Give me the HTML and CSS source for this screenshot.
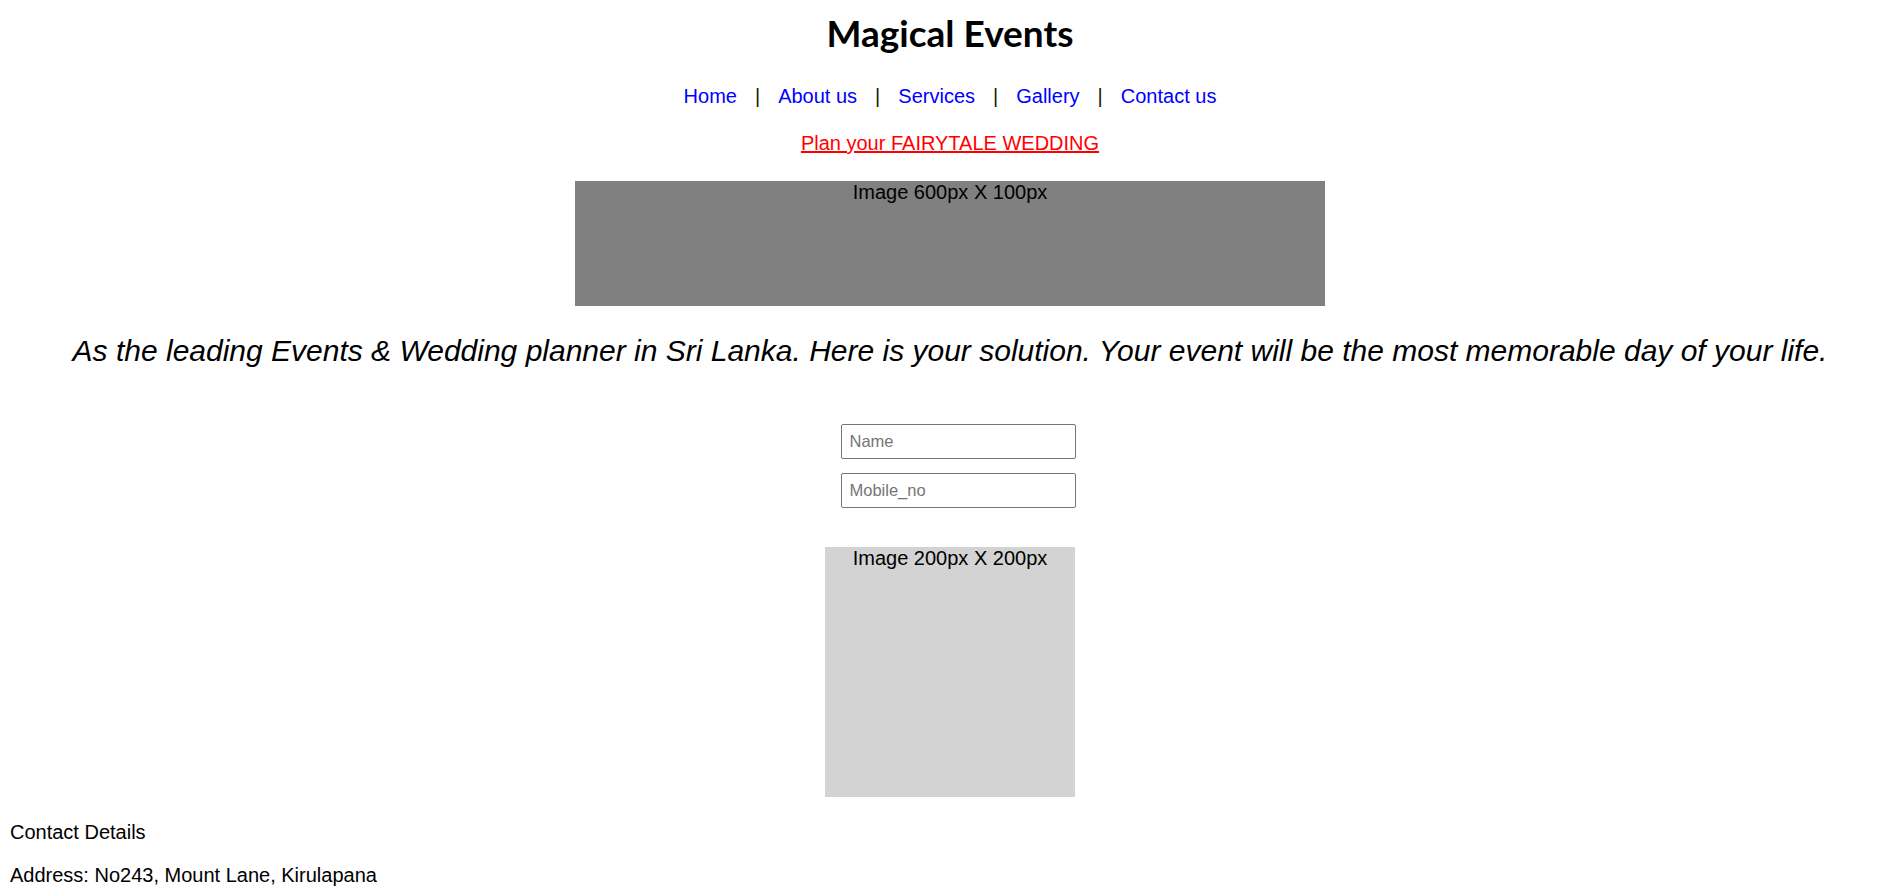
FILE: index.html
```html
<!DOCTYPE html>
<html lang="en">
<head>
    <meta charset="UTF-8">
    <meta name="viewport" content="width=device-width, initial-scale=1.0">
    <title>Magical Events</title>
    <link rel="stylesheet" href="styles.css">
</head>
<body>

    <div class="main">
        <h1 class="title">Magical Events</h1>

        <nav class="nav">
            <a href="#">Home</a><span class="sep">|</span><a href="#">About us</a><span class="sep">|</span><a href="#">Services</a><span class="sep">|</span><a href="#">Gallery</a><span class="sep">|</span><a href="#">Contact us</a>
        </nav>

        <p class="promo"><a href="#">Plan your FAIRYTALE WEDDING</a></p>

        <div class="banner">Image 600px X 100px</div>

        <p class="intro">As the leading Events &amp; Wedding planner in Sri Lanka. Here is your solution. Your event will be the most memorable day of your life.</p>

        <form class="enquiry">
            <input type="text" placeholder="Name">
            <input type="text" placeholder="Mobile_no">
        </form>

        <div class="photo">Image 200px X 200px</div>
    </div>

    <div class="contact">
        <p>Contact Details</p>
        <p>Address: No243, Mount Lane, Kirulapana</p>
    </div>

</body>
</html>
```

FILE: styles.css
```css
body {
    margin: 0 10px;
    font-family: "Liberation Sans", Arial, sans-serif;
    font-size: 20px;
    line-height: 23px;
    color: black;
    background: white;
}

.main {
    text-align: center;
    padding-left: 14px;
}

.title {
    font-family: Lato, "Liberation Sans", sans-serif;
    font-weight: bold;
    font-size: 37px;
    line-height: 48px;
    margin: 9px 0 0;
}

.nav {
    margin-top: 28px;
}

.nav a {
    color: blue;
    text-decoration: none;
}

.sep {
    margin: 0 18px;
    color: #1a1a00;
}

.promo {
    margin: 24px 0 0;
}

.promo a {
    color: red;
}

.banner {
    width: 750px;
    height: 125px;
    margin: 26px auto 0;
    background: gray;
}

.intro {
    font-style: italic;
    font-size: 30px;
    line-height: 34px;
    margin: 28px 0 0;
}

.enquiry {
    display: flex;
    flex-direction: column;
    align-items: center;
    gap: 14px;
    margin-top: 56px;
    padding-left: 16px;
}

.enquiry input {
    width: 235px;
    height: 35px;
    box-sizing: border-box;
    border: 1px solid #767676;
    border-radius: 2px;
    padding: 0 8px;
    font-family: "Liberation Sans", Arial, sans-serif;
    font-size: 16.5px;
}

.enquiry input::placeholder {
    color: #757575;
}

.photo {
    width: 250px;
    height: 250px;
    margin: 39px auto 0;
    background: lightgray;
}

.contact {
    padding-top: 4px;
}

.contact p {
    margin: 20px 0;
}
```
